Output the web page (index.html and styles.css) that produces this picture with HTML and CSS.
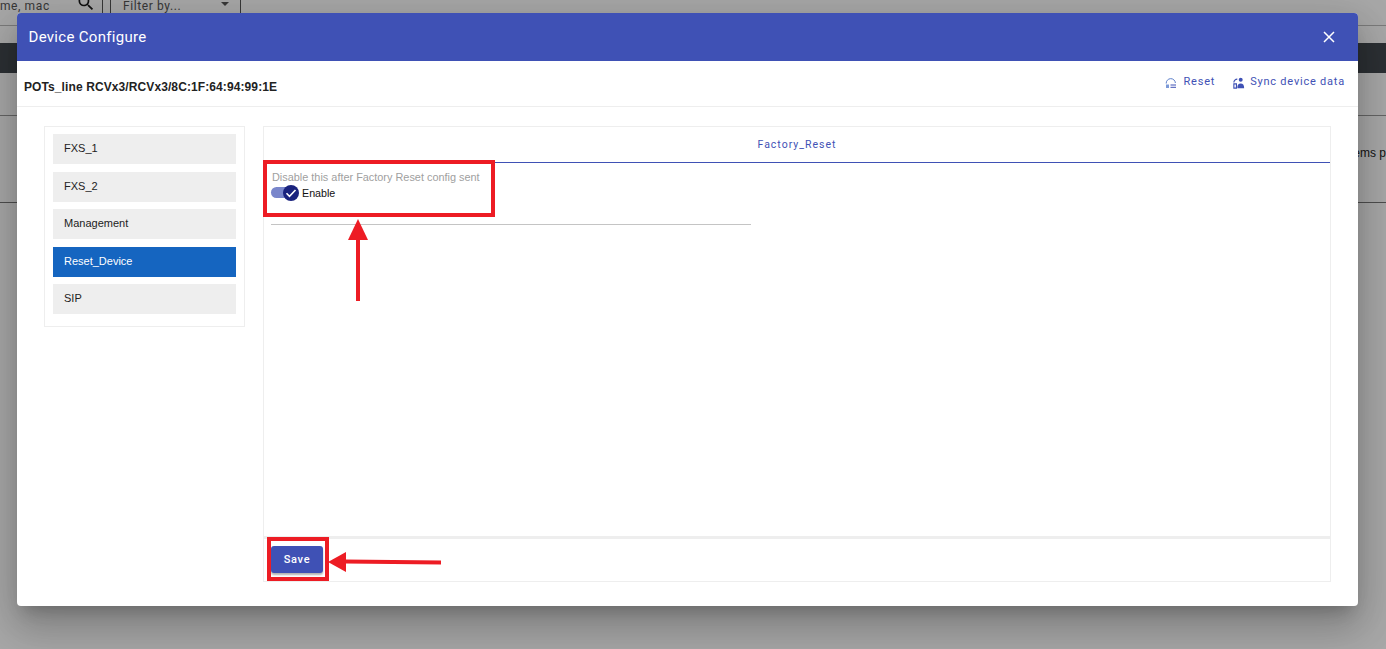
FILE: index.html
```html
<!DOCTYPE html>
<html lang="en">
<head>
<meta charset="utf-8">
<title>Device Configure</title>
<link rel="stylesheet" href="styles.css">
</head>
<body>
<div class="page">
  <div class="topbar">
    <span class="search-text">me, mac</span>
    <svg class="search-icon" viewBox="0 0 24 24" width="20" height="20"><path fill="#1c1c1c" d="M15.5 14h-.79l-.28-.27A6.47 6.47 0 0 0 16 9.5 6.500 6.500 0 1 0 9.500 16c1.610 0 3.090-.59 4.230-1.570l.27.28v.79l5 4.990L20.490 19l-4.990-5zm-6 0C7.010 14 5 11.990 5 9.500S7.010 5 9.500 5 14 7.010 14 9.500 11.990 14 9.500 14z"/></svg>
    <i class="tick"></i>
    <div class="filter"><span>Filter by...</span><i class="caret"></i></div>
  </div>
  <div class="topbar-gap"></div>
  <div class="darkband"></div>
  <div class="row-a"></div>
  <div class="row-b"><span class="items">Items p</span></div>
</div>

<div class="backdrop"></div>

<section class="dialog">
  <header class="dialog-head">
    <h1>Device Configure</h1>
    <svg class="close" viewBox="0 0 12 12" width="12" height="12"><path d="M1 1l10 10M11 1L1 11" stroke="#fff" stroke-width="1.5" fill="none"/></svg>
  </header>
  <div class="subhead">
    <div class="device-name">POTs_line RCVx3/RCVx3/8C:1F:64:94:99:1E</div>
    <div class="actions">
      <a class="action">
        <svg viewBox="0 0 12 12" width="12" height="12"><path d="M1.200 6.500A4.600 4.600 0 1 1 10.400 6" stroke="#5c7fc9" stroke-width="1" fill="none"/><path d="M1 7.500h3V11H1z" fill="#7c9ad8"/><path d="M5.500 8h5.500M5.500 10.300h5.500" stroke="#3f51b5" stroke-width="1"/></svg>
        <span>Reset</span>
      </a>
      <a class="action">
        <svg viewBox="0 0 14 14" width="12" height="12"><circle cx="9" cy="3.200" r="2.300" fill="#3f51b5"/><path d="M5 13c0-4 1.500-5.500 4-5.500s4 1.500 4 5.500z" fill="#3f51b5"/><path d="M1 6.500A4 4 0 0 1 5 2.500M1 8v5h3V8z" stroke="#3f51b5" stroke-width="1.300" fill="none"/></svg>
        <span>Sync device data</span>
      </a>
    </div>
  </div>
  <div class="dialog-body">
    <nav class="side">
      <a class="side-item">FXS_1</a>
      <a class="side-item">FXS_2</a>
      <a class="side-item">Management</a>
      <a class="side-item active">Reset_Device</a>
      <a class="side-item">SIP</a>
    </nav>
    <main class="panel">
      <div class="tab">Factory_Reset</div>
      <div class="panel-content">
        <div class="field">
          <div class="hint">Disable this after Factory Reset config sent</div>
          <label class="toggle-row">
            <span class="toggle">
              <span class="track"></span>
              <span class="thumb"><svg viewBox="0 0 16 16" width="16" height="16"><path d="M3.500 8.300l3 3 6-6.300" stroke="#fff" stroke-width="1.600" fill="none"/></svg></span>
            </span>
            <span class="toggle-label">Enable</span>
          </label>
        </div>
      </div>
      <div class="panel-foot"><button class="save">Save</button></div>
    </main>
  </div>
</section>

<svg class="annotations" width="1386" height="649" viewBox="0 0 1386 649">
  <rect x="265" y="162" width="228" height="53" fill="none" stroke="#ed1c24" stroke-width="4"/>
  <path d="M358 301V238" stroke="#ed1c24" stroke-width="4" fill="none"/>
  <path d="M348 240L358 219L368 240z" fill="#ed1c24"/>
  <rect x="269" y="539" width="58" height="40" fill="none" stroke="#ed1c24" stroke-width="4"/>
  <path d="M345 561.500L441 562.500" stroke="#ed1c24" stroke-width="4" fill="none"/>
  <path d="M328 562L346 552V572z" fill="#ed1c24"/>
</svg>
</body>
</html>
```

FILE: styles.css
```css
* { box-sizing: border-box; }
html, body { margin: 0; height: 100%; }
body {
  width: 1386px;
  height: 649px;
  overflow: hidden;
  position: relative;
  background: #fff;
  font-family: "Liberation Sans", Arial, sans-serif;
  font-size: 12px;
  color: #222;
}
.page { display: flex; flex-direction: column; height: 649px; }
.topbar {
  height: 26px;
  flex: none;
  border-bottom: 1px solid #bbb;
  display: flex;
  align-items: flex-start;
  color: #555;
  font-family: Roboto, sans-serif;
  font-size: 12px;
  letter-spacing: .6px;
}
.topbar-gap { height: 17px; flex: none; }
.search-text { width: 76px; line-height: 12px; height: 12px; }
.search-icon { margin-top: -7px; flex: none; }
.tick { width: 1px; height: 13px; background: #555; margin-left: 6px; flex: none; }
.filter {
  margin-left: 7px;
  border-left: 1px solid #555;
  border-right: 1px solid #555;
  width: 131px;
  height: 14px;
  padding-left: 12px;
  display: flex;
  position: relative;
  line-height: 12px;
  flex: none;
}
.caret {
  position: absolute;
  left: 110px;
  top: 2px;
  border: 4px solid transparent;
  border-top: 4px solid #555;
  border-bottom: 0;
}
.darkband { height: 30px; background: #444a50; }
.row-a { height: 43px; border-bottom: 1px solid #999; }
.row-b { height: 87px; border-bottom: 1px solid #777; padding-top: 30px; text-align: right; white-space: nowrap; }
.items { color: #222; font-size: 12px; }

.backdrop { position: absolute; inset: 0; background: rgba(0,0,0,.34); }

.dialog {
  position: absolute;
  left: 17px;
  top: 13px;
  width: 1341px;
  height: 593px;
  background: #fff;
  border-radius: 4px;
  overflow: hidden;
  display: flex;
  flex-direction: column;
  box-shadow: 0 11px 15px -7px rgba(0,0,0,.2), 0 24px 38px 3px rgba(0,0,0,.14), 0 9px 46px 8px rgba(0,0,0,.12);
}
.dialog-head {
  height: 48px;
  flex: none;
  background: #3f51b5;
  display: flex;
  align-items: center;
  justify-content: space-between;
  padding: 0 23px 0 11.500px;
  color: #fff;
}
.dialog-head h1 { margin: 0; font: 400 15px/1 Roboto, sans-serif; letter-spacing: .3px; }
.subhead {
  height: 46px;
  flex: none;
  border-bottom: 1px solid #eee;
  display: flex;
  justify-content: space-between;
  padding: 0 13px 0 7px;
}
.device-name { font: 700 12px/1 "Liberation Sans", sans-serif; letter-spacing: .1px; color: #222; margin-top: 20px; }
.actions { display: flex; gap: 18px; margin-top: 14px; align-items: flex-start; }
.action { display: flex; align-items: center; gap: 7px; color: #3f51b5; font: 400 11px/12px Roboto, sans-serif; letter-spacing: .78px; }
.action svg { margin-top: 2px; }
.action:last-child { gap: 5px; }
.dialog-body {
  flex: 1;
  display: flex;
  align-items: flex-start;
  padding: 19px 27px 24px 27px;
  gap: 18px;
}
.side {
  width: 201px;
  height: 201px;
  flex: none;
  border: 1px solid #eee;
  padding: 7px 8px 0;
  display: flex;
  flex-direction: column;
  gap: 7.500px;
}
.side-item {
  height: 30px;
  flex: none;
  background: #eee;
  padding: 0 11px;
  line-height: 28px;
  font-size: 11px;
  color: #222;
}
.side-item.active { background: #1565c0; color: #fff; }
.panel {
  width: 1068px;
  height: 456px;
  flex: none;
  border: 1px solid #eee;
  display: flex;
  flex-direction: column;
}
.tab {
  height: 36px;
  flex: none;
  border-bottom: 1px solid #3f51b5;
  text-align: center;
  color: #3f51b5;
  font: 400 10.500px/35px Roboto, sans-serif;
  letter-spacing: 1px;
}
.panel-content { flex: 1; padding: 8px 7px 0; }
.field { width: 480px; height: 54px; border-bottom: 1px solid #c4c4c4; }
.hint { font-size: 10.900px; line-height: 13px; color: #a0a0a0; margin-left: 1px; }
.toggle-row { display: flex; align-items: center; gap: 3px; margin-top: 1px; height: 15px; }
.toggle { position: relative; width: 28px; height: 15px; flex: none; }
.track { position: absolute; left: 0; top: 2px; width: 24px; height: 11px; border-radius: 6px; background: #7986cb; }
.thumb { position: absolute; left: 12px; top: 0; width: 16px; height: 16px; border-radius: 50%; background: #1a237e; display: block; }
.thumb svg { display: block; }
.toggle-label { font-size: 10.700px; line-height: 13px; color: #111; margin-top: 2px; }
.panel-foot { height: 45px; flex: none; border-top: 3px solid #eee; padding: 7px 7px 0; }
.save {
  display: block;
  width: 52px;
  height: 27px;
  border: 0;
  border-radius: 3px;
  background: #3f51b5;
  color: #fff;
  font: 500 11px/27px Roboto, sans-serif;
  letter-spacing: .7px;
  padding: 0;
  box-shadow: 0 2px 2px rgba(0,0,0,.3);
}
.annotations { position: absolute; left: 0; top: 0; }
```
